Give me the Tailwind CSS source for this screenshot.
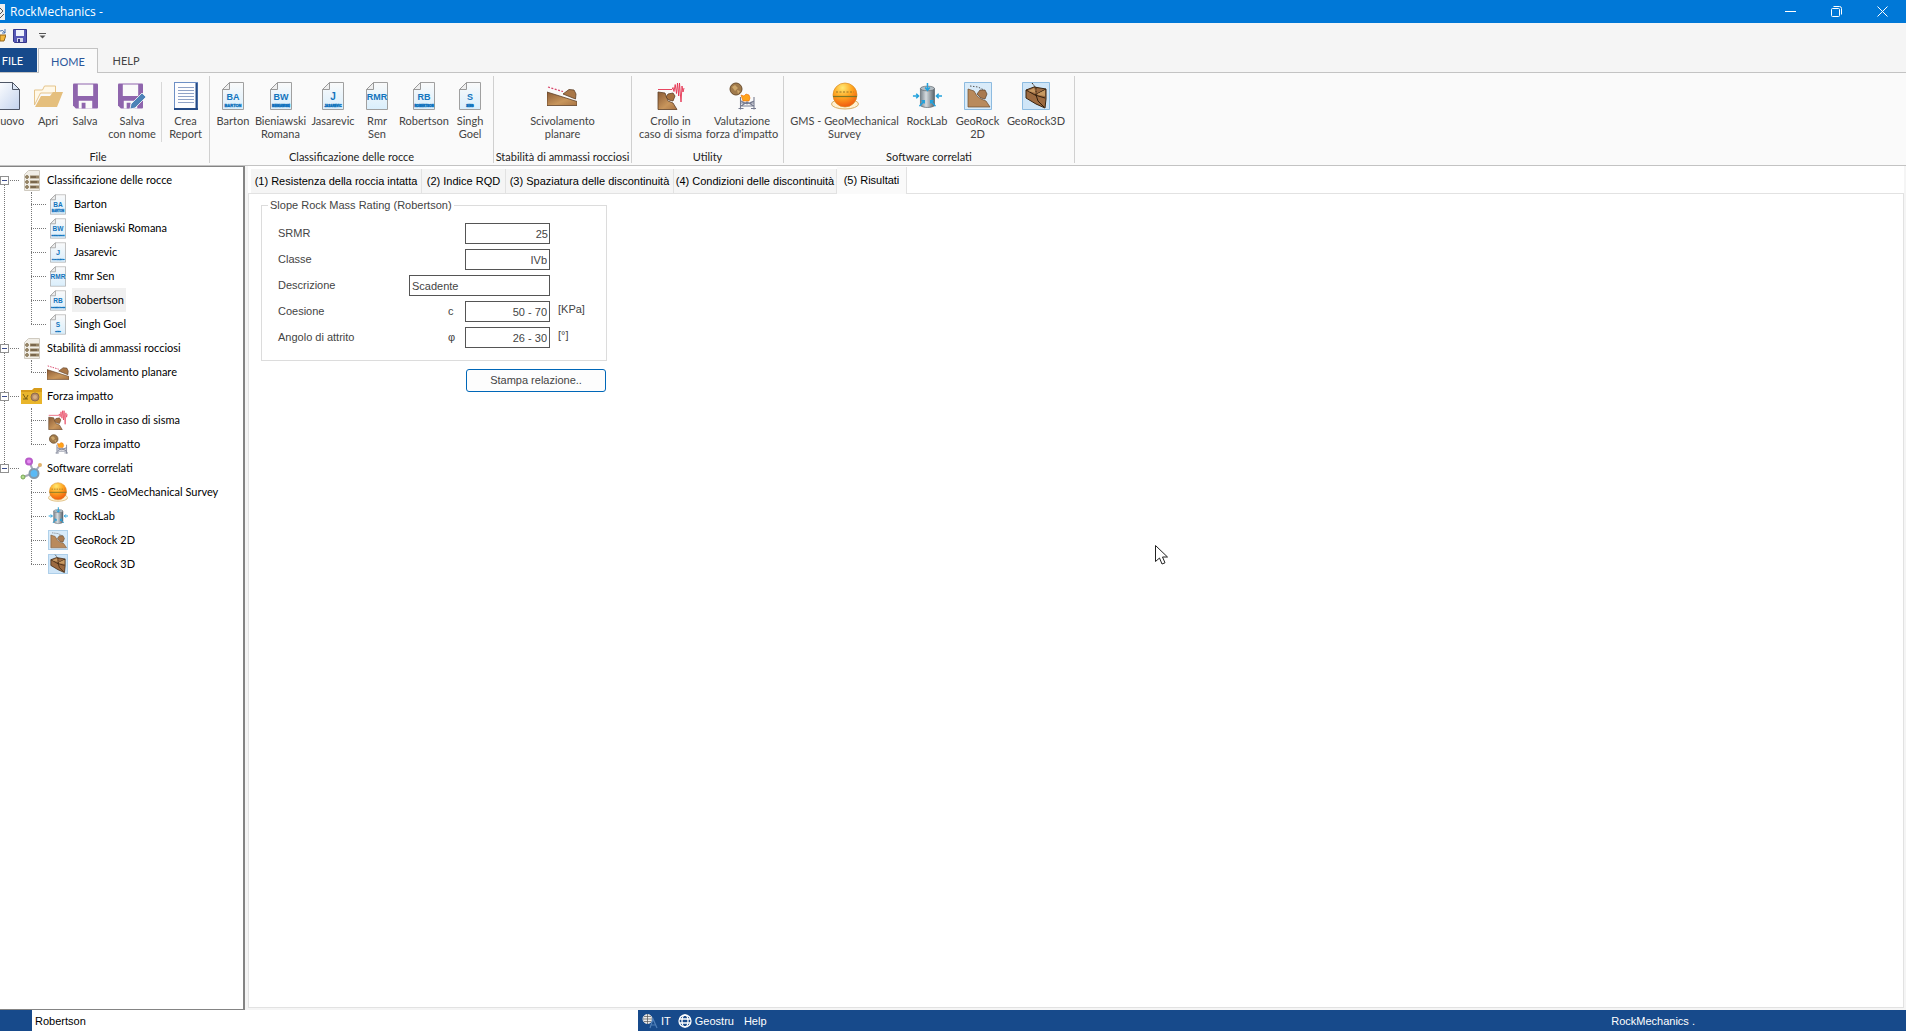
<!DOCTYPE html>
<html lang="it">
<head>
    <meta charset="UTF-8">
    <meta name="viewport" content="width=device-width, initial-scale=1.0">
    <title>RockMechanics</title>
    <script src="https://cdn.jsdelivr.net/npm/@tailwindcss/browser@4"></script>
</head>
<body class="min-h-screen flex flex-col overflow-x-hidden bg-[#f5f5f5] font-['Liberation_Sans',Arial,sans-serif] text-[11px] leading-[13px] text-[#444]">

    <!-- gradients stay in a rendered svg, they do not paint from a hidden one -->
    <svg class="absolute size-0" aria-hidden="true">
        <defs>
            <linearGradient id="g-rock" x1="0" y1="0" x2="1" y2="1"><stop offset="0" stop-color="#8a5a35"/><stop offset=".6" stop-color="#c8965c"/><stop offset="1" stop-color="#a87444"/></linearGradient>
            <linearGradient id="g-blue" x1="0" y1="0" x2="1" y2="1"><stop offset="0" stop-color="#fff"/><stop offset="1" stop-color="#c3d3ee"/></linearGradient>
            <linearGradient id="g-steel"><stop offset="0" stop-color="#78828a"/><stop offset=".4" stop-color="#d5dbdf"/><stop offset="1" stop-color="#596269"/></linearGradient>
            <radialGradient id="g-gold" cx=".4" cy=".2" r=".8"><stop offset="0" stop-color="#ffe873"/><stop offset=".5" stop-color="#ffa51f"/><stop offset="1" stop-color="#f05a10"/></radialGradient>
            <linearGradient id="g-doc" x1="0" y1="0" x2="0" y2="1"><stop offset="0" stop-color="#fafafa"/><stop offset="1" stop-color="#d9eefc"/></linearGradient>
        </defs>
    </svg>

    <!-- shared icons -->
    <svg class="hidden">
        <symbol id="doc" viewBox="0 0 22 28">
            <path d="M7.5.5h14v27H.5v-20z" fill="url(#g-doc)" stroke="#a0a0a0"/>
            <path d="M7.500.5v7h-7z" fill="#eee" stroke="#999"/>
        </symbol>
        <symbol id="doc-ba" viewBox="0 0 22 28"><use href="#doc"/><g fill="#1274bd" font-family="Liberation Sans" font-weight="bold" text-anchor="middle"><text x="11" y="18" font-size="9">BA</text><text x="11" y="25" font-size="4" stroke="#1274bd" stroke-width=".4">BARTON</text></g></symbol>
        <symbol id="doc-bw" viewBox="0 0 22 28"><use href="#doc"/><g fill="#1274bd" font-family="Liberation Sans" font-weight="bold" text-anchor="middle"><text x="11" y="18" font-size="9">BW</text><text x="11" y="25" font-size="3" stroke="#1274bd" stroke-width=".6">BIENIAWSKI</text></g></symbol>
        <symbol id="doc-j" viewBox="0 0 22 28"><use href="#doc"/><g fill="#1274bd" font-family="Liberation Sans" font-weight="bold" text-anchor="middle"><text x="11" y="18" font-size="10">J</text><text x="11" y="25" font-size="3" stroke="#1274bd" stroke-width=".5">JASAREVIC</text></g></symbol>
        <symbol id="doc-rmr" viewBox="0 0 22 28"><use href="#doc"/><text x="11" y="18" font-family="Liberation Sans" font-size="9" fill="#1274bd" font-weight="bold" text-anchor="middle">RMR</text></symbol>
        <symbol id="doc-rb" viewBox="0 0 22 28"><use href="#doc"/><g fill="#1274bd" font-family="Liberation Sans" font-weight="bold" text-anchor="middle"><text x="11" y="18" font-size="9">RB</text><text x="11" y="25" font-size="3" stroke="#1274bd" stroke-width=".6">ROBERTSON</text></g></symbol>
        <symbol id="doc-s" viewBox="0 0 22 28"><use href="#doc"/><g fill="#1274bd" font-family="Liberation Sans" font-weight="bold" text-anchor="middle"><text x="11" y="18" font-size="9">S</text><text x="11" y="25" font-size="3" stroke="#1274bd" stroke-width=".6">SING</text></g></symbol>
        <symbol id="slide" viewBox="0 0 30 28">
            <path d="M0 10 30 19.500v4H0z" fill="url(#g-rock)" stroke="#5e4027" stroke-width=".8"/>
            <path d="M16 12 22 7.500l5 .5 2 4-.5 5z" fill="#a97748" stroke="#5e4027" stroke-width=".8"/>
            <path d="M1 5l15 4.500" stroke="#d8456a" stroke-width="1.300" stroke-dasharray="2 1.500"/>
        </symbol>
        <symbol id="quake" viewBox="0 0 28 28">
            <path d="M1 10l7 1 3 8 5 2 4 6.500H1z" fill="url(#g-rock)" stroke="#5e4027" stroke-width=".8"/>
            <path d="M9 15l2-3 5-1 2 3-2 5-4-1z" fill="#a5713f" stroke="#5e4027" stroke-width=".8"/>
            <path d="M1 7.500h14l1-2 1 4 1.200-7 1.300 9 1-10.500 1.200 13L22.500 1l1.500 19L25 4l1 6 1-4" fill="none" stroke="#e5314f" stroke-width=".9"/>
        </symbol>
        <symbol id="impact" viewBox="0 0 28 28">
            <circle cx="8" cy="7" r="6" fill="#a07a4b" stroke="#6a4d2e"/>
            <path d="M4 5l3-2 3 3-3 3zM9 8l3 1-2 3z" fill="#cda76c"/>
            <path d="M13 13l3 1 2-2 3 1 1 3-1 3h-6z" fill="#ffa31a" stroke="#ef6c00" stroke-width=".6"/>
            <path d="M12.500 15v12.500M26 15v12.500M10.500 26.500h5M23 26.500h5M13 19l6 3 7-3M13 24l6-4 7 4M13 21h13M13 24h13" fill="none" stroke="#777c90" stroke-width="1.100"/>
        </symbol>
        <symbol id="sphere" viewBox="0 0 28 28">
            <ellipse cx="14" cy="22" rx="13.500" ry="5" fill="#fff1d2" stroke="#d8b068"/>
            <circle cx="14" cy="13" r="12" fill="url(#g-gold)" stroke="#d98d24" stroke-width=".7"/>
            <path d="M2 14.500h24" stroke="#7c7626" stroke-width="1.200"/>
            <path d="M5 10h18" stroke="#997222" stroke-dasharray="2 1.500"/>
        </symbol>
        <symbol id="cylinder" viewBox="0 0 32 28">
            <path d="M9 6v18c2 3 13 3 15 0V6z" fill="url(#g-steel)" stroke="#596269" stroke-width=".7"/>
            <ellipse cx="16.500" cy="6" rx="7.500" ry="2.500" fill="#b5bec4" stroke="#596269" stroke-width=".7"/>
            <path d="M16.500 0v7M14 5l2.500 3L19 5M1 14h6M4.500 11.500 7 14l-2.500 2.500M32 14h-6M28.500 11.500 26 14l2.500 2.500M8 25l5-6M13 22v-3h-3M25 25l-5-6M20 22v-3h3" fill="none" stroke="#23a1dc" stroke-width="1.600"/>
        </symbol>
        <symbol id="geo2d" viewBox="0 0 28 28">
            <path d="M.5.5h27v27H.5z" fill="#d9ebf9" stroke="#8dbbe0"/>
            <path d="M4 7l6 2 3 5 4 3 5 2 4 6H4z" fill="#b98a5c" stroke="#6c4a2c" stroke-width=".7"/>
            <path d="M13 12l3-4h5l2 4-2 5-4-1z" fill="#a97a50" stroke="#5a3e25" stroke-width=".7"/>
            <path d="M6 4l8 1 6 3" fill="none" stroke="#555" stroke-dasharray="1.500 1.500"/>
        </symbol>
        <symbol id="geo3d" viewBox="0 0 28 28">
            <path d="M.5.5h27v27H.5z" fill="#cfe5f7" stroke="#8dbbe0"/>
            <path d="M4 8l8-3 12 2v10l-1 9-9-4-10-6z" fill="#9c6a40" stroke="#38230f"/>
            <path d="M4 8l9 5 11-6M13 13l10 3M14 13l2 6 6 6" fill="none" stroke="#33200e"/>
            <path d="M15 12l8-4v6l-7-1zM6 9l6-3 2 5z" fill="#c79a63"/>
            <path d="M10 1l4 5v6" fill="none" stroke="#33200e" stroke-dasharray="2 1"/>
        </symbol>
        <symbol id="list" viewBox="0 0 16 21">
            <path d="M4.500.5h11v20H.5v-16z" fill="#f1eee7" stroke="#cfcac0"/>
            <path d="M6 5.500h9v3H6zM6 10.500h9v3H6zM6 15.500h9v3H6z" fill="#988566"/>
            <path d="M7 7h5M7 12h6M7 17h5" stroke="#5d4b34"/>
            <g fill="#b2a17e" stroke="#6d5a3c" stroke-width=".8"><circle cx="3" cy="7" r="1.400"/><circle cx="3" cy="12" r="1.400"/><circle cx="3" cy="17" r="1.400"/></g>
        </symbol>
        <symbol id="floppy" viewBox="0 0 26 26">
            <path d="M1 0h24a1 1 0 0 1 1 1v24a1 1 0 0 1-1 1H3l-3-3V1a1 1 0 0 1 1-1z" fill="#8f65ad"/>
            <path d="M5 1h16v12H5zM6 18h14v8H6z" fill="#fafafa"/>
            <path d="M9 20h4v6H9z" fill="#8f65ad"/>
        </symbol>
    </svg>

    <!-- title bar -->
    <header class="flex h-[23px] items-center bg-[#0078d7] text-white">
        <svg class="h-4 w-[5px]" viewBox="0 0 5 16"><path d="M0 0h5v16H0z" fill="#eee"/><path d="M0 4l3 3-3 3M0 14l4-4" stroke="#555" fill="none"/></svg>
        <h1 class="ml-[5px] grow font-['Open_Sans',sans-serif] text-[12px]">RockMechanics -</h1>
        <div class="flex pr-px">
            <button class="flex w-[45px] justify-center" aria-label="Riduci"><svg class="size-[11px]" viewBox="0 0 11 11"><path d="M0 5.500h11" stroke="#fff"/></svg></button>
            <button class="flex w-[46px] justify-center" aria-label="Ripristina"><svg class="size-[11px]" viewBox="0 0 11 11" fill="none" stroke="#fff"><rect x=".5" y="2.500" width="8" height="8" rx="1"/><path d="M2.500.5h6a2 2 0 0 1 2 2v6"/></svg></button>
            <button class="flex w-[46px] justify-center" aria-label="Chiudi"><svg class="size-[11px]" viewBox="0 0 11 11" stroke="#fff"><path d="M.5.5l10 10M10.500.5l-10 10"/></svg></button>
        </div>
    </header>

    <!-- quick access -->
    <div class="flex h-[25px] items-center">
        <button aria-label="Apri"><svg class="h-4 w-[6px]" viewBox="0 0 6 16"><path d="M0 7h6l-2 6H0z" fill="#f4b73c" stroke="#96671a"/><path d="M0 3q3-2 5 2M5 1v4H2" fill="none" stroke="#4a73ad"/></svg></button>
        <button class="ml-[7px]" aria-label="Salva"><svg class="size-[14px]" viewBox="0 0 14 14"><path d="M.5.5h13v13h-12l-1-1z" fill="#5658b5" stroke="#36388a"/><path d="M3 1h8v6H3z" fill="#eef1fb"/><path d="M4 9h6v4H4z" fill="#d5d8ec"/><path d="M5 10h2v3H5z" fill="#333680"/></svg></button>
        <button class="ml-3" aria-label="Personalizza"><svg class="h-[6px] w-[7px]" viewBox="0 0 7 6"><path d="M0 .5h7" stroke="#555"/><path d="M.5 2.500h6l-3 3z" fill="#555"/></svg></button>
    </div>

    <!-- ribbon tabs -->
    <nav class="flex h-[25px] items-stretch border-b border-[#c3c3c3] font-[Lato,sans-serif]">
        <button class="w-[37px] bg-[#174a8b] pr-[14px] text-right text-white">FILE</button>
        <button class="-mb-px ml-px w-[60px] border border-b-0 border-[#c3c3c3] bg-[#fafafa] text-[#2b579a]">HOME</button>
        <button class="w-[56px]">HELP</button>
    </nav>

    <!-- ribbon -->
    <div class="-ml-[13px] flex h-[93px] border-b border-[#c3c3c3] bg-[#fafafa] pt-[3px] pb-[2px] font-[Lato,sans-serif] whitespace-nowrap">
        <section class="flex flex-col justify-between border-r border-[#d0d0d0]">
            <div class="flex grow">
                <button class="flex w-[42px] flex-col items-center gap-1 pt-[6px]">
                    <svg class="h-[28px] w-[24px]" viewBox="0 0 24 28"><path d="M.5.5h16l7 7v20H.5z" fill="url(#g-blue)" stroke="#4e5666"/><path d="M16.500.5v7h7z" fill="#dce6f6" stroke="#4e5666"/></svg>
                    <span>Nuovo</span>
                </button>
                <button class="flex w-[38px] flex-col items-center gap-1 pt-[6px]">
                    <svg class="h-[28px] w-[29px]" viewBox="0 0 29 28"><path d="M.5 23V8h8l2-4h11v7h-15z" fill="#fff8e8" stroke="#e5c48a"/><path d="M1 25 7 14h9l3-4h10l-6 15z" fill="#e5bf7d"/></svg>
                    <span>Apri</span>
                </button>
                <button class="flex w-[36px] flex-col items-center gap-1 pt-[6px]">
                    <svg class="h-[28px] w-[25px]"><use href="#floppy"/></svg>
                    <span>Salva</span>
                </button>
                <button class="flex w-[58px] flex-col items-center gap-1 pt-[6px]">
                    <svg class="h-[28px] w-[28px]" viewBox="0 0 28 28"><use href="#floppy" x="0" y="1" width="25" height="26"/><path d="M12 27l1-5L24 11l4 4-11 11z" fill="#4d83b7" stroke="#fafafa" stroke-width=".8"/></svg>
                    <span>Salva<br>con nome</span>
                </button>
                <button class="mt-[6px] flex h-[60px] w-[48px] flex-col items-center gap-1 border-l border-[#d8d8d8]">
                    <svg class="h-[28px] w-[24px]" viewBox="0 0 24 28"><path d="M0 0h24v28H0z" fill="#6d8fc5"/><path d="M1 1h21v25H1z" fill="#fdfdff"/><path d="M22.500 1v26M0 27h24" stroke="#254b86" stroke-width="2"/><path d="M4 5.500h16M4 8.500h16M4 11.500h16M4 14.500h16M4 17.500h16M4 20.500h16" stroke="#8fa2c6"/></svg>
                    <span>Crea<br>Report</span>
                </button>
            </div>
            <h2 class="text-center text-[#222]">File</h2>
        </section>

        <section class="flex flex-col justify-between border-r border-[#d0d0d0] px-[4px]">
            <div class="flex grow">
                <button class="flex w-[38px] flex-col items-center gap-1 pt-[6px]"><svg class="h-[28px] w-[22px]"><use href="#doc-ba"/></svg><span>Barton</span></button>
                <button class="flex w-[57px] flex-col items-center gap-1 pt-[6px]"><svg class="h-[28px] w-[22px]"><use href="#doc-bw"/></svg><span>Bieniawski<br>Romana</span></button>
                <button class="flex w-[48px] flex-col items-center gap-1 pt-[6px]"><svg class="h-[28px] w-[22px]"><use href="#doc-j"/></svg><span>Jasarevic</span></button>
                <button class="flex w-[40px] flex-col items-center gap-1 pt-[6px]"><svg class="h-[28px] w-[22px]"><use href="#doc-rmr"/></svg><span>Rmr<br>Sen</span></button>
                <button class="flex w-[54px] flex-col items-center gap-1 pt-[6px]"><svg class="h-[28px] w-[22px]"><use href="#doc-rb"/></svg><span>Robertson</span></button>
                <button class="flex w-[38px] flex-col items-center gap-1 pt-[6px]"><svg class="h-[28px] w-[22px]"><use href="#doc-s"/></svg><span>Singh<br>Goel</span></button>
            </div>
            <h2 class="text-center text-[#222]">Classificazione delle rocce</h2>
        </section>

        <section class="flex w-[138px] flex-col justify-between border-r border-[#d0d0d0]">
            <div class="flex grow justify-center">
                <button class="flex flex-col items-center gap-1 pt-[6px]"><svg class="h-[28px] w-[30px]"><use href="#slide"/></svg><span>Scivolamento<br>planare</span></button>
            </div>
            <h2 class="text-center text-[#222]">Stabilità di ammassi rocciosi</h2>
        </section>

        <section class="flex flex-col justify-between border-r border-[#d0d0d0] px-[4px]">
            <div class="flex grow">
                <button class="flex w-[69px] flex-col items-center gap-1 pt-[6px]"><svg class="size-[28px]"><use href="#quake"/></svg><span>Crollo in<br>caso di sisma</span></button>
                <button class="flex w-[74px] flex-col items-center gap-1 pt-[6px]"><svg class="size-[28px]"><use href="#impact"/></svg><span>Valutazione<br>forza d'impatto</span></button>
            </div>
            <h2 class="text-center text-[#222]">Utility</h2>
        </section>

        <section class="flex flex-col justify-between border-r border-[#d0d0d0] px-[4px]">
            <div class="flex grow">
                <button class="flex w-[113px] flex-col items-center gap-1 pt-[6px]"><svg class="size-[28px]"><use href="#sphere"/></svg><span>GMS - GeoMechanical<br>Survey</span></button>
                <button class="flex w-[52px] flex-col items-center gap-1 pt-[6px]"><svg class="h-[28px] w-[30px]"><use href="#cylinder"/></svg><span>RockLab</span></button>
                <button class="flex w-[49px] flex-col items-center gap-1 pt-[6px]"><svg class="size-[28px]"><use href="#geo2d"/></svg><span>GeoRock<br>2D</span></button>
                <button class="flex w-[68px] flex-col items-center gap-1 pt-[6px]"><svg class="size-[28px]"><use href="#geo3d"/></svg><span>GeoRock3D</span></button>
            </div>
            <h2 class="text-center text-[#222]">Software correlati</h2>
        </section>
    </div>

    <main class="flex grow">
        <!-- navigation tree -->
        <aside class="w-[245px] shrink-0 border-t border-r-2 border-b border-[#848484] bg-white pt-px font-[Lato,sans-serif] leading-6 text-black">
            <ul class="relative">
                <li class="absolute top-3 left-[4px] h-[288px] border-l border-dotted border-[#777]" aria-hidden="true"></li>
                <li>
                    <div class="flex h-6 items-center">
                        <button class="relative size-[9px] border border-[#919191] bg-white" aria-label="Comprimi"><span class="absolute top-[3px] left-px h-px w-[5px] bg-[#3b4c8c]"></span></button>
                        <span class="ml-px w-[9px] border-t border-dotted border-[#777]"></span>
                        <svg class="ml-[5px] h-[21px] w-4"><use href="#list"/></svg>
                        <span class="ml-[7px]">Classificazione delle rocce</span>
                    </div>
                    <ul class="relative pl-[31px]">
                        <li class="absolute top-0 h-[132px] border-l border-dotted border-[#777]" aria-hidden="true"></li>
                        <li class="flex h-6 items-center"><span class="w-[15px] border-t border-dotted border-[#777]"></span><svg class="ml-[4px] h-[21px] w-4"><use href="#doc-ba"/></svg><a href="#" class="ml-[7px] px-px">Barton</a></li>
                        <li class="flex h-6 items-center"><span class="w-[15px] border-t border-dotted border-[#777]"></span><svg class="ml-[4px] h-[21px] w-4"><use href="#doc-bw"/></svg><a href="#" class="ml-[7px] px-px">Bieniawski Romana</a></li>
                        <li class="flex h-6 items-center"><span class="w-[15px] border-t border-dotted border-[#777]"></span><svg class="ml-[4px] h-[21px] w-4"><use href="#doc-j"/></svg><a href="#" class="ml-[7px] px-px">Jasarevic</a></li>
                        <li class="flex h-6 items-center"><span class="w-[15px] border-t border-dotted border-[#777]"></span><svg class="ml-[4px] h-[21px] w-4"><use href="#doc-rmr"/></svg><a href="#" class="ml-[7px] px-px">Rmr Sen</a></li>
                        <li class="flex h-6 items-center"><span class="w-[15px] border-t border-dotted border-[#777]"></span><svg class="ml-[4px] h-[21px] w-4"><use href="#doc-rb"/></svg><a href="#" class="ml-[6px] bg-[#f0f0f0] px-[2px]">Robertson</a></li>
                        <li class="flex h-6 items-center"><span class="w-[15px] border-t border-dotted border-[#777]"></span><svg class="ml-[4px] h-[21px] w-4"><use href="#doc-s"/></svg><a href="#" class="ml-[7px] px-px">Singh Goel</a></li>
                    </ul>
                </li>
                <li>
                    <div class="flex h-6 items-center">
                        <button class="relative size-[9px] border border-[#919191] bg-white" aria-label="Comprimi"><span class="absolute top-[3px] left-px h-px w-[5px] bg-[#3b4c8c]"></span></button>
                        <span class="ml-px w-[9px] border-t border-dotted border-[#777]"></span>
                        <svg class="ml-[5px] h-[21px] w-4"><use href="#list"/></svg>
                        <span class="ml-[7px]">Stabilità di ammassi rocciosi</span>
                    </div>
                    <ul class="relative pl-[31px]">
                        <li class="absolute top-0 h-[12px] border-l border-dotted border-[#777]" aria-hidden="true"></li>
                        <li class="flex h-6 items-center"><span class="w-[15px] border-t border-dotted border-[#777]"></span><svg class="ml-px h-[21px] w-[22px]"><use href="#slide"/></svg><a href="#" class="ml-[4px] px-px">Scivolamento planare</a></li>
                    </ul>
                </li>
                <li>
                    <div class="flex h-6 items-center">
                        <button class="relative size-[9px] border border-[#919191] bg-white" aria-label="Comprimi"><span class="absolute top-[3px] left-px h-px w-[5px] bg-[#3b4c8c]"></span></button>
                        <span class="ml-px w-[9px] border-t border-dotted border-[#777]"></span>
                        <svg class="ml-[2px] h-[16px] w-[21px]" viewBox="0 0 21 16"><path d="M0 2h11l2-2h8v16H0z" fill="#d79c1b"/><path d="M0 4h21v12H0z" fill="#e9b52b"/><circle cx="14" cy="9" r="4" fill="#b58b68" stroke="#8d6a4a"/><circle cx="14" cy="9" r="2" fill="#d4ae85"/><path d="M2 6l3 5 2-4M2 11h5" stroke="#7c6014" fill="none"/></svg>
                        <span class="ml-[5px]">Forza impatto</span>
                    </div>
                    <ul class="relative pl-[31px]">
                        <li class="absolute top-0 h-[36px] border-l border-dotted border-[#777]" aria-hidden="true"></li>
                        <li class="flex h-6 items-center"><span class="w-[15px] border-t border-dotted border-[#777]"></span><svg class="ml-[2px] size-[20px]"><use href="#quake"/></svg><a href="#" class="ml-[5px] px-px">Crollo in caso di sisma</a></li>
                        <li class="flex h-6 items-center"><span class="w-[15px] border-t border-dotted border-[#777]"></span><svg class="ml-[2px] size-[20px]"><use href="#impact"/></svg><a href="#" class="ml-[5px] px-px">Forza impatto</a></li>
                    </ul>
                </li>
                <li>
                    <div class="flex h-6 items-center">
                        <button class="relative size-[9px] border border-[#919191] bg-white" aria-label="Comprimi"><span class="absolute top-[3px] left-px h-px w-[5px] bg-[#3b4c8c]"></span></button>
                        <span class="ml-px w-[9px] border-t border-dotted border-[#777]"></span>
                        <svg class="ml-px h-[23px] w-[22px]" viewBox="0 0 22 23"><path d="M9 4l5 12 6-8M14 16 3 20" stroke="#aab" stroke-width="2" fill="none"/><circle cx="9" cy="4.500" r="3" fill="#e58cf0" stroke="#b95bc9" stroke-width="2"/><circle cx="14" cy="16.500" r="4.500" fill="#59b9f5" stroke="#8499aa" stroke-width="2"/><circle cx="20" cy="8" r="2" fill="#e0b36c"/><circle cx="3" cy="20" r="2" fill="#b3dc8f" stroke="#77a753"/></svg>
                        <span class="ml-[5px]">Software correlati</span>
                    </div>
                    <ul class="relative pl-[31px]">
                        <li class="absolute top-0 h-[84px] border-l border-dotted border-[#777]" aria-hidden="true"></li>
                        <li class="flex h-6 items-center"><span class="w-[15px] border-t border-dotted border-[#777]"></span><svg class="ml-[2px] size-[20px]"><use href="#sphere"/></svg><a href="#" class="ml-[5px] px-px">GMS - GeoMechanical Survey</a></li>
                        <li class="flex h-6 items-center"><span class="w-[15px] border-t border-dotted border-[#777]"></span><svg class="ml-[2px] size-[20px]"><use href="#cylinder"/></svg><a href="#" class="ml-[5px] px-px">RockLab</a></li>
                        <li class="flex h-6 items-center"><span class="w-[15px] border-t border-dotted border-[#777]"></span><svg class="ml-[2px] size-[20px]"><use href="#geo2d"/></svg><a href="#" class="ml-[5px] px-px">GeoRock 2D</a></li>
                        <li class="flex h-6 items-center"><span class="w-[15px] border-t border-dotted border-[#777]"></span><svg class="ml-[2px] size-[20px]"><use href="#geo3d"/></svg><a href="#" class="ml-[5px] px-px">GeoRock 3D</a></li>
                    </ul>
                </li>
            </ul>
        </aside>

        <!-- result pages -->
        <div class="flex grow flex-col pr-[2px] pb-[2px] pl-[3px]">
            <div class="flex h-[28px] items-end border-b border-[#e2e2e2] bg-white pl-[3px] text-black">
                <button class="h-[24px] w-[171px] border-r border-[#e2e2e2] bg-[#f5f5f5] pt-px">(1) Resistenza della roccia intatta</button>
                <button class="h-[24px] w-[84px] border-r border-[#e2e2e2] bg-[#f5f5f5] pt-px">(2) Indice RQD</button>
                <button class="h-[24px] w-[168px] border-r border-[#e2e2e2] bg-[#f5f5f5] pt-px">(3) Spaziatura delle discontinuità</button>
                <button class="h-[24px] w-[163px] border-r border-[#e2e2e2] bg-[#f5f5f5] pt-px">(4) Condizioni delle discontinuità</button>
                <button class="-mb-px h-[27px] w-[70px] border-r border-[#e2e2e2] bg-[#fafafa] pb-px">(5) Risultati</button>
            </div>
            <div class="grow border border-t-0 border-[#e2e2e2] bg-white pt-[5px] pl-[12px]">
                <fieldset class="h-[162px] w-[346px] border border-[#dcdcdc] pt-[11px] pl-[16px]">
                    <legend class="-ml-[10px] px-[2px]">Slope Rock Mass Rating (Robertson)</legend>
                    <div class="grid grid-cols-[131px_41px_15px_85px_auto] gap-y-[5px]">
                        <label for="srmr" class="col-span-3 pt-[4px]">SRMR</label>
                        <input id="srmr" value="25" class="h-[21px] border border-[#555] bg-white px-px text-right">
                        <span></span>
                        <label for="classe" class="col-span-3 pt-[4px]">Classe</label>
                        <input id="classe" value="IVb" class="h-[21px] border border-[#555] bg-white px-[2px] text-right">
                        <span></span>
                        <label for="descrizione" class="pt-[4px]">Descrizione</label>
                        <input id="descrizione" value="Scadente" class="col-span-3 h-[21px] border border-[#555] bg-white px-[2px]">
                        <span></span>
                        <label for="coesione" class="pt-[4px]">Coesione</label>
                        <span class="col-span-2 pt-[4px] pl-[39px]">c</span>
                        <input id="coesione" value="50 - 70" class="h-[21px] border border-[#555] bg-white px-[2px] text-right">
                        <span class="pt-[2px] pl-2">[KPa]</span>
                        <label for="attrito" class="pt-[4px]">Angolo di attrito</label>
                        <span class="col-span-2 pt-[4px] pl-[39px]">φ</span>
                        <input id="attrito" value="26 - 30" class="h-[21px] border border-[#555] bg-white px-[2px] text-right">
                        <span class="pt-[2px] pl-2">[°]</span>
                    </div>
                </fieldset>
                <div class="flex w-[345px] justify-end pt-2">
                    <button class="h-[23px] w-[140px] rounded-[3px] border border-[#0067b8] bg-[#fdfdfd]">Stampa relazione..</button>
                </div>
            </div>
        </div>
    </main>

    <!-- status bar -->
    <footer class="flex h-[21px] items-center bg-[#174a8b] text-white">
        <div class="ml-8 flex h-full w-[606px] items-center bg-white pt-px pl-[3px] text-black">Robertson</div>
        <svg class="ml-[4px] h-[16px] w-[16px]" viewBox="0 0 16 16"><circle cx="5.500" cy="6" r="4.500" fill="#eee" stroke="#ddd"/><path d="M1 6h9M5.500 1v10M2 3.500h7M2 8.500h7" stroke="#555" stroke-width=".7"/><path d="M8 15l3-9 4 9M9 12h5" fill="none" stroke="#4f7fb8" stroke-width="1.200"/></svg>
        <a href="#" class="ml-[3px] pt-[2px]">IT</a>
        <svg class="ml-[7px] size-[14px]" viewBox="0 0 14 14" fill="none" stroke="#fff" stroke-width="1.300"><circle cx="7" cy="7" r="6"/><ellipse cx="7" cy="7" rx="3" ry="6"/><path d="M1 5h12M1 9h12"/></svg>
        <a href="#" class="ml-[3px] pt-[2px]">Geostru</a>
        <a href="#" class="ml-[10px] grow pt-[2px]">Help</a>
        <span class="pt-[2px] pr-[211px]">RockMechanics .</span>
    </footer>

    <svg class="pointer-events-none absolute top-[545px] left-[1155px] h-[20px] w-[13px]" viewBox="0 0 13 20"><path d="M.5.5v16l4-3.500 2.500 6 3-1.200-2.500-5.800h5z" fill="#fff" stroke="#222"/></svg>
</body>
</html>
